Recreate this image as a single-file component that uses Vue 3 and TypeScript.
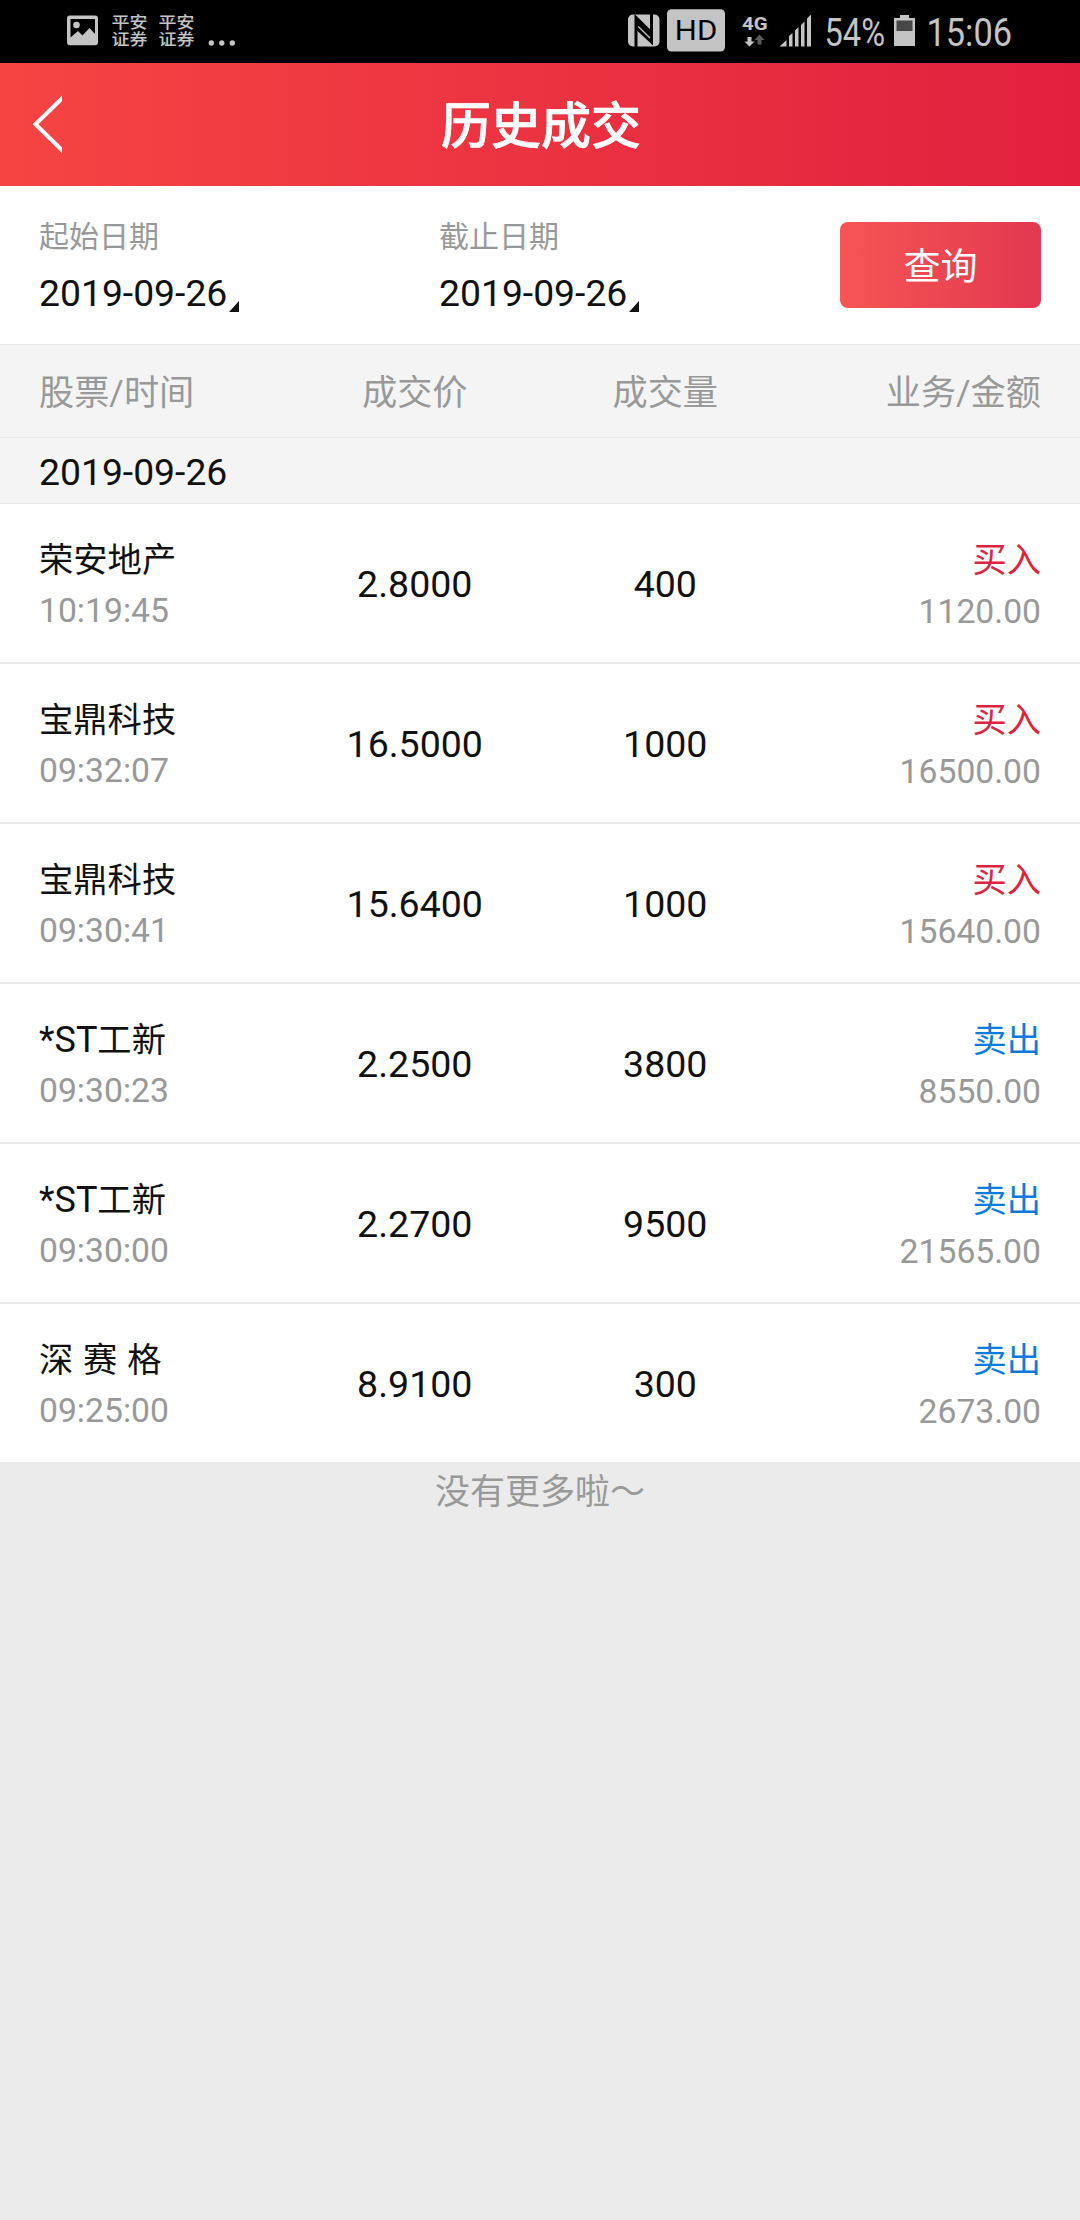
<script setup lang="ts">
interface Trade {
  prefix?: string
  name: string
  time: string
  price: string
  volume: string
  side: 'buy' | 'sell'
  amount: string
}

const sideLabel: Record<Trade['side'], string> = { buy: '买入', sell: '卖出' }

const filters = [
  { label: '起始日期', value: '2019-09-26' },
  { label: '截止日期', value: '2019-09-26' },
]

const columns = ['股票/时间', '成交价', '成交量', '业务/金额']

const trades: Trade[] = [
  { name: '荣安地产', time: '10:19:45', price: '2.8000', volume: '400', side: 'buy', amount: '1120.00' },
  { name: '宝鼎科技', time: '09:32:07', price: '16.5000', volume: '1000', side: 'buy', amount: '16500.00' },
  { name: '宝鼎科技', time: '09:30:41', price: '15.6400', volume: '1000', side: 'buy', amount: '15640.00' },
  { prefix: '*ST', name: '工新', time: '09:30:23', price: '2.2500', volume: '3800', side: 'sell', amount: '8550.00' },
  { prefix: '*ST', name: '工新', time: '09:30:00', price: '2.2700', volume: '9500', side: 'sell', amount: '21565.00' },
  { name: '深 赛 格', time: '09:25:00', price: '8.9100', volume: '300', side: 'sell', amount: '2673.00' },
]
</script>

<template>
  <div class="screen">
    <div class="status">
      <svg class="status-left" width="140" height="63" viewBox="60 0 140 63">
        <path fill="#c4c4c4" fill-rule="evenodd" d="M70 15.500h25a3 3 0 0 1 3 3v23.700a3 3 0 0 1-3 3h-25a3 3 0 0 1-3-3v-23.700a3 3 0 0 1 3-3zM70.500 19v18.500l7.500-6.500 4.500 4.500 7-7.500 5.500 6v-15z" />
        <circle cx="76.500" cy="25" r="3.300" fill="#c4c4c4" />
        <g class="badge-text" fill="#c4c4c4">
          <text x="111.500" y="28.300" textLength="36" lengthAdjust="spacingAndGlyphs">平安</text>
          <text x="111.500" y="45" textLength="36" lengthAdjust="spacingAndGlyphs">证券</text>
          <text x="158.500" y="28.300" textLength="36" lengthAdjust="spacingAndGlyphs">平安</text>
          <text x="158.500" y="45" textLength="36" lengthAdjust="spacingAndGlyphs">证券</text>
        </g>
      </svg>
      <svg class="dots" width="40" height="63" viewBox="200 0 40 63" fill="#c4c4c4">
        <circle cx="211.300" cy="43" r="2.700" />
        <circle cx="221.800" cy="43" r="2.700" />
        <circle cx="232.300" cy="43" r="2.700" />
      </svg>
      <svg class="status-right" width="400" height="63" viewBox="620 0 400 63">
        <rect x="628" y="14.500" width="31.500" height="32" rx="5" fill="#c4c4c4" />
        <path fill="#000" d="M634.500 14L650 29.300V14H653V45.500L637.500 31V47H634.500z" />
        <path d="M638.300 26.500L650 38" stroke="#c4c4c4" stroke-width="1.300" />
        <rect x="667" y="9.300" width="58" height="42.200" rx="4.500" fill="#c4c4c4" />
        <text class="roboto" x="674.800" y="40" font-size="27.500" textLength="42.500" lengthAdjust="spacingAndGlyphs" fill="#000">HD</text>
        <text class="roboto bold" x="742" y="30.300" font-size="18.500" textLength="25.500" lengthAdjust="spacingAndGlyphs" fill="#c4c4c4">4G</text>
        <path fill="#c4c4c4" d="M747.500 37h4v4.500h3l-5 5-5-5h3z" />
        <path fill="#5a5a5a" d="M757.500 44.500h4v-4.500h3l-5-5.500-5 5.500h3z" />
        <path fill="#c4c4c4" d="M779.500 46.500L786.500 40V46.500zM789 46.500V36L792.500 33V46.500zM795 46.500V30.500L798.500 27V46.500zM801 46.500V25L804.500 21.500V46.500zM807 46.500V18.500L811 14.500V46.500z" />
        <text class="roboto" x="824.500" y="46" font-size="39" textLength="60.500" lengthAdjust="spacingAndGlyphs" fill="#c4c4c4">54%</text>
        <path fill="#c4c4c4" d="M900 15h9v3h6v28h-21v-28h6z" />
        <rect x="896.500" y="20.500" width="16" height="10.500" fill="#484848" />
        <text class="roboto" x="926.500" y="46" font-size="39" textLength="85.500" lengthAdjust="spacingAndGlyphs" fill="#c4c4c4">15:06</text>
      </svg>
    </div>

    <header class="bar">
      <svg class="back" width="30" height="60" viewBox="32 93 30 60">
        <path d="M66 93.500L35.500 123.300L66 153" fill="none" stroke="#fff" stroke-width="4" />
      </svg>
      <h1>历史成交</h1>
    </header>

    <section class="query">
      <div v-for="f in filters" :key="f.label" class="field">
        <span class="label">{{ f.label }}</span>
        <span class="value">{{ f.value }}<svg class="corner" width="10" height="11" viewBox="0 0 10 11"><path d="M10 0V11H0z" fill="#111" /></svg></span>
      </div>
      <button type="button">查询</button>
    </section>

    <div class="grid head">
      <span v-for="c in columns" :key="c">{{ c }}</span>
    </div>
    <div class="day">2019-09-26</div>

    <div v-for="t in trades" :key="t.time" class="grid row">
      <div class="cell">
        <span class="name"><span v-if="t.prefix" class="prefix">{{ t.prefix }}</span>{{ t.name }}</span>
        <span class="sub">{{ t.time }}</span>
      </div>
      <span class="num">{{ t.price }}</span>
      <span class="num">{{ t.volume }}</span>
      <div class="cell">
        <span class="name" :class="t.side">{{ sideLabel[t.side] }}</span>
        <span class="sub amount">{{ t.amount }}</span>
      </div>
    </div>

    <p class="end">没有更多啦～</p>
  </div>
</template>

<style>
body {
  background: #ebebeb;
}
</style>

<style scoped>
.screen {
  width: 1080px;
  height: 2220px;
  overflow: hidden;
  background: #ebebeb;
  color: #111;
  font-family: Roboto, "Noto Sans CJK SC", sans-serif;
}
.status {
  display: flex;
  box-sizing: border-box;
  height: 63px;
  padding: 0 60px;
  background: #000;
}
.status svg {
  flex: none;
  overflow: visible;
}
.badge-text {
  font: 500 16px "Noto Sans CJK SC", sans-serif;
}
.dots {
  margin-right: auto;
}
.roboto {
  font-family: Roboto, sans-serif;
}
.bold {
  font-weight: 700;
}
.bar {
  display: grid;
  grid-template-columns: 62px 1fr 62px;
  align-items: center;
  height: 123px;
  background: linear-gradient(90deg, #f64443, #e1213e);
}
.back {
  justify-self: end;
  margin-top: -2px;
}
h1 {
  margin: 4px 0 0 2px;
  font-size: 50px;
  font-weight: 500;
  line-height: 60px;
  text-align: center;
  color: #fff;
  -webkit-text-stroke: 0.7px #fff;
}
.query {
  display: flex;
  box-sizing: border-box;
  height: 158px;
  padding: 31px 39px 0;
  background: #fff;
}
.field {
  display: flex;
  flex-direction: column;
  width: 400px;
}
.label {
  font-size: 30px;
  line-height: 40px;
  color: #999;
}
.value {
  margin-top: 12px;
  font-size: 37.300px;
  line-height: 48px;
}
.corner {
  margin-left: 2px;
  vertical-align: -6px;
}
button {
  flex: none;
  box-sizing: border-box;
  width: 201px;
  height: 86px;
  margin: 5px 0 0 1px;
  padding: 5px 0 0;
  border: 0;
  border-radius: 8px;
  background: linear-gradient(90deg, #f65554, #e33850);
  color: #fff;
  font: 400 37px/81px Roboto, "Noto Sans CJK SC", sans-serif;
}
.grid {
  display: grid;
  grid-template-columns: repeat(4, 1fr);
  box-sizing: border-box;
  padding: 0 39px;
  text-align: center;
}
.grid > :first-child {
  text-align: left;
}
.grid > :last-child {
  text-align: right;
}
.head {
  height: 94px;
  border-top: 1px solid #e8e8e8;
  border-bottom: 1px solid #ebebeb;
  background: #f4f4f4;
  font-size: 35.200px;
  line-height: 97px;
  color: #999;
}
.head span {
  height: 92px;
}
.day {
  box-sizing: border-box;
  height: 66px;
  padding-left: 39px;
  border-bottom: 1px solid #e8e8e8;
  background: #f4f4f4;
  font-size: 37.300px;
  line-height: 68px;
}
.row {
  height: 160px;
  border-bottom: 2px solid #ebebeb;
  background: #fff;
}
.cell {
  display: flex;
  flex-direction: column;
  padding-top: 31px;
}
.name {
  font-size: 34.300px;
  line-height: 50px;
  white-space: pre;
  word-spacing: 1.300px;
}
.prefix {
  font-size: 36px;
  line-height: 1;
}
.sub {
  padding-top: 1px;
  font-size: 33.700px;
  line-height: 50px;
  color: #999;
}
.amount {
  padding-top: 2px;
}
.buy {
  color: #dc2440;
}
.sell {
  color: #0c7bdc;
}
.num {
  font-size: 37.500px;
  line-height: 160px;
}
.end {
  margin: 0;
  font-size: 35px;
  line-height: 58px;
  text-align: center;
  color: #999;
}
</style>
